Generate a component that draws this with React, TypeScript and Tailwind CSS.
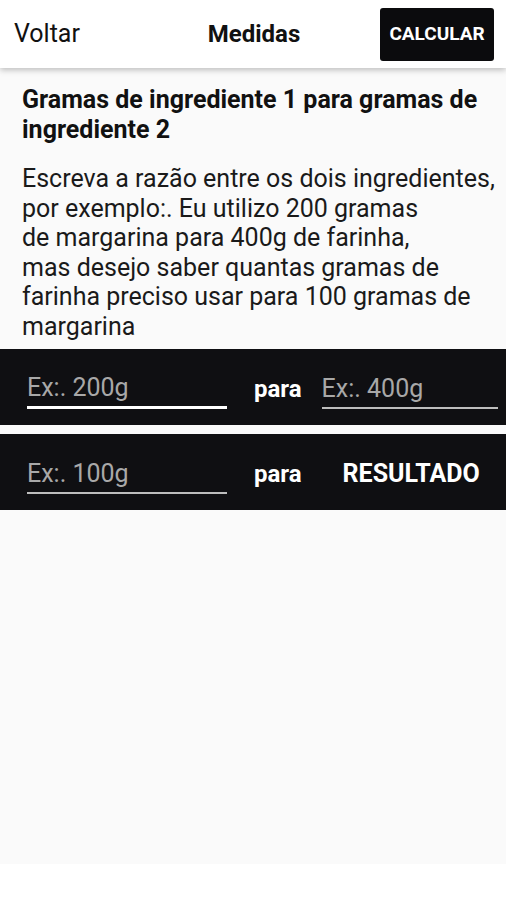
import { useState } from "react"

export default function App() {
  const [a, setA] = useState("")
  const [b, setB] = useState("")
  const [c, setC] = useState("")

  return (
    <div className="min-h-[864px] bg-[#fafafa] font-['Roboto',sans-serif] text-[#111]">
      {/* Header */}
      <div className="relative z-10 flex h-[68px] items-center bg-white pl-[14px] pr-[12px] shadow-[0_2px_6px_rgba(0,0,0,0.25)]">
        <div className="flex-1 text-[25px] text-[#111]">Voltar</div>
        <span className="text-[24px] font-bold">Medidas</span>
        <div className="flex flex-1 justify-end">
          <button className="flex h-[53px] w-[114px] items-center justify-center rounded-[3px] bg-[#0b0b0d] text-[19px] font-bold text-white">
            CALCULAR
          </button>
        </div>
      </div>

      {/* Descrição */}
      <div className="pl-[22px] pr-[4px] pt-[17px] pb-[8px]">
        <h1 className="pr-[18px] text-[25px] font-bold leading-[30px]">
          Gramas de ingrediente 1 para gramas de ingrediente 2
        </h1>
        <p className="mt-[19px] whitespace-nowrap text-[25px] leading-[29.5px] text-[#1a1a1a]">
          Escreva a razão entre os dois ingredientes,
          <br />
          por exemplo:. Eu utilizo 200 gramas
          <br />
          de margarina para 400g de farinha,
          <br />
          mas desejo saber quantas gramas de
          <br />
          farinha preciso usar para 100 gramas de
          <br />
          margarina
        </p>
      </div>

      {/* Linha 1 */}
      <div className="flex h-[76px] items-center bg-[#0f0f12] pl-[27px] pr-[7px] pt-[4px]">
        <input
          value={a}
          onChange={(e) => setA(e.target.value)}
          placeholder="Ex:. 200g"
          className="h-[40px] w-[200px] border-b-[3px] border-white bg-transparent text-[25px] text-white outline-none placeholder:text-[#a8a8a8]"
        />
        <span className="ml-[27px] text-[24px] font-bold text-white">para</span>
        <input
          value={b}
          onChange={(e) => setB(e.target.value)}
          placeholder="Ex:. 400g"
          className="ml-[20px] h-[40px] w-[176px] border-b-[2px] border-[#bdbdbd] bg-transparent text-[25px] text-white outline-none placeholder:text-[#a8a8a8]"
        />
      </div>

      <div className="h-[9px]" />

      {/* Linha 2 */}
      <div className="flex h-[76px] items-center bg-[#0f0f12] pl-[27px] pr-[7px] pt-[4px]">
        <input
          value={c}
          onChange={(e) => setC(e.target.value)}
          placeholder="Ex:. 100g"
          className="h-[40px] w-[200px] border-b-[2px] border-[#bdbdbd] bg-transparent text-[25px] text-white outline-none placeholder:text-[#a8a8a8]"
        />
        <span className="ml-[27px] text-[24px] font-bold text-white">para</span>
        <span className="ml-[41px] text-[25px] font-bold text-white">RESULTADO</span>
      </div>
    </div>
  )
}
